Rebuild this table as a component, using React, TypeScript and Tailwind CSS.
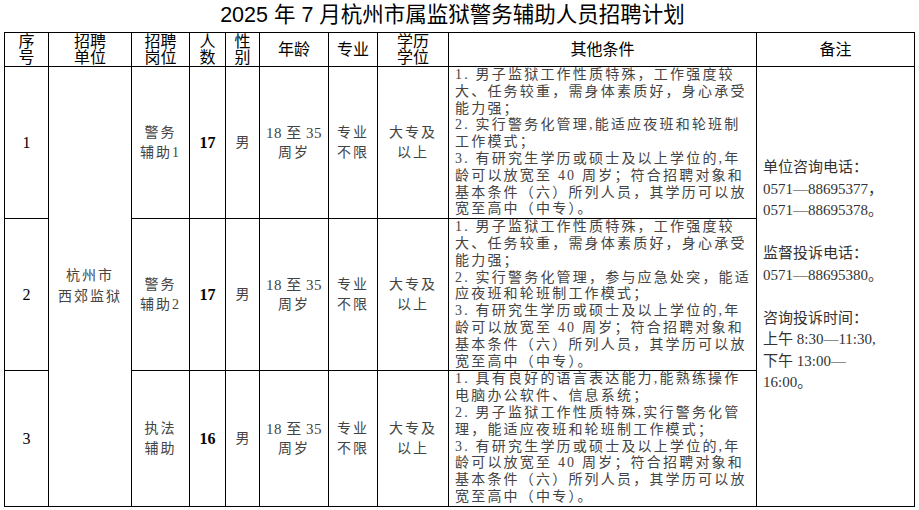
const serif = "font-['Liberation_Serif','Noto_Sans_CJK_SC',serif]"
const sans = "font-['Liberation_Sans','Noto_Sans_CJK_SC',sans-serif]"

const conditions: string[][] = [
  [
    '1. 男子监狱工作性质特殊，工作强度较',
    '大、任务较重，需身体素质好，身心承受',
    '能力强；',
    '2. 实行警务化管理,能适应夜班和轮班制',
    '工作模式；',
    '3. 有研究生学历或硕士及以上学位的,年',
    '龄可以放宽至 40 周岁；符合招聘对象和',
    '基本条件（六）所列人员，其学历可以放',
    '宽至高中（中专）。',
  ],
  [
    '1. 男子监狱工作性质特殊，工作强度较',
    '大、任务较重，需身体素质好，身心承受',
    '能力强；',
    '2. 实行警务化管理，参与应急处突，能适',
    '应夜班和轮班制工作模式；',
    '3. 有研究生学历或硕士及以上学位的,年',
    '龄可以放宽至 40 周岁；符合招聘对象和',
    '基本条件（六）所列人员，其学历可以放',
    '宽至高中（中专）。',
  ],
  [
    '1. 具有良好的语言表达能力,能熟练操作',
    '电脑办公软件、信息系统；',
    '2. 男子监狱工作性质特殊,实行警务化管',
    '理，能适应夜班和轮班制工作模式；',
    '3. 有研究生学历或硕士及以上学位的,年',
    '龄可以放宽至 40 周岁；符合招聘对象和',
    '基本条件（六）所列人员，其学历可以放',
    '宽至高中（中专）。',
  ],
]

const rows = [
  { no: '1', post: ['警务', '辅助1'], count: '17', h: 'h-[152px]' },
  { no: '2', post: ['警务', '辅助2'], count: '17', h: 'h-[152px]' },
  { no: '3', post: ['执法', '辅助'], count: '16', h: 'h-[135px]' },
]

const remarks = [
  '单位咨询电话：',
  '0571—88695377，',
  '0571—88695378。',
  '',
  '监督投诉电话：',
  '0571—88695380。',
  '',
  '咨询投诉时间：',
  '上午 8:30—11:30,',
  '下午 13:00—',
  '16:00。',
]

function Head({ lines }: { lines: string[] }) {
  return (
    <th className="border border-black p-0 h-[34px] font-normal text-[16px] leading-[16px] text-black text-center align-middle">
      {lines.map((l, i) => (
        <div key={i}>{l}</div>
      ))}
    </th>
  )
}

function Two({ a, b }: { a: string; b: string }) {
  return (
    <td className="border border-black p-0 text-center align-middle text-[14px] leading-[20px] tracking-[2px] text-[#444]">
      <div>{a}</div>
      <div>{b}</div>
    </td>
  )
}

export default function App() {
  return (
    <div className={`w-[919px] h-[510px] bg-white overflow-hidden ${serif}`}>
      {/* Title */}
      <div className={`h-8 pt-[1px] pr-[14px] text-center text-[21.5px] leading-[28px] text-black ${sans}`}>
        2025 年 7 月杭州市属监狱警务辅助人员招聘计划
      </div>

      <table className="ml-1 w-[910px] table-fixed border-collapse">
        <colgroup>
          <col className="w-[44px]" />
          <col className="w-[83px]" />
          <col className="w-[58px]" />
          <col className="w-[36px]" />
          <col className="w-[34px]" />
          <col className="w-[69px]" />
          <col className="w-[49px]" />
          <col className="w-[71px]" />
          <col className="w-[308px]" />
          <col className="w-[158px]" />
        </colgroup>
        <thead className={sans}>
          <tr className="h-[34px]">
            <Head lines={['序', '号']} />
            <Head lines={['招聘', '单位']} />
            <Head lines={['招聘', '岗位']} />
            <Head lines={['人', '数']} />
            <Head lines={['性', '别']} />
            <Head lines={['年龄']} />
            <Head lines={['专业']} />
            <Head lines={['学历', '学位']} />
            <Head lines={['其他条件']} />
            <Head lines={['备注']} />
          </tr>
        </thead>
        <tbody>
          {rows.map((r, idx) => (
            <tr key={r.no} className={r.h}>
              <td className="border border-black p-0 text-center align-middle text-[16px] text-black">{r.no}</td>
              {idx === 0 && (
                <td
                  rowSpan={3}
                  className="border border-black p-0 text-center align-middle text-[14px] leading-[21px] tracking-[2px] text-[#444]"
                >
                  <div>杭州市</div>
                  <div>西郊监狱</div>
                </td>
              )}
              <Two a={r.post[0]} b={r.post[1]} />
              <td className="border border-black p-0 text-center align-middle text-[16px] font-bold text-black">
                {r.count}
              </td>
              <td className="border border-black p-0 text-center align-middle text-[14px] text-[#444]">男</td>
              <td className="border border-black p-0 text-center align-middle text-[14px] leading-[20px] text-[#444]">
                <div className="text-[15px] tracking-[0.5px]">18 至 35</div>
                <div className="tracking-[2px]">周岁</div>
              </td>
              <Two a="专业" b="不限" />
              <Two a="大专及" b="以上" />
              <td className="border border-black p-0 pl-[6px] align-top text-[14px] leading-[16.8px] tracking-[2.2px] text-[#444] whitespace-nowrap">
                {conditions[idx].map((l, i) => (
                  <div key={i}>{l}</div>
                ))}
              </td>
              {idx === 0 && (
                <td
                  rowSpan={3}
                  className="border border-black p-0 pl-[6px] pt-[90px] align-top text-[15px] leading-[21.5px] text-[#333] whitespace-nowrap"
                >
                  {remarks.map((l, i) => (
                    <div key={i} className="h-[21.5px]">
                      {l}
                    </div>
                  ))}
                </td>
              )}
            </tr>
          ))}
        </tbody>
      </table>
    </div>
  )
}
